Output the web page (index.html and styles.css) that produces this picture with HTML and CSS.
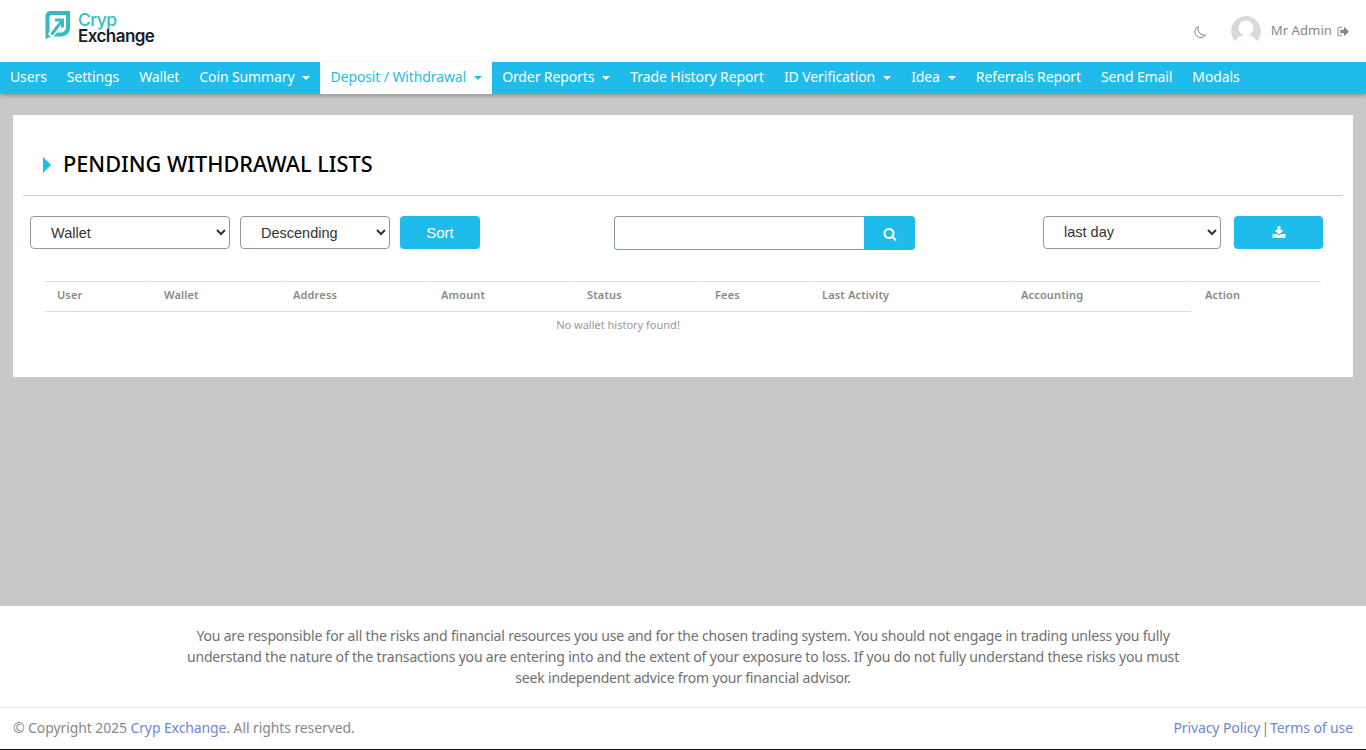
FILE: index.html
```html
<!DOCTYPE html>
<html>
<head>
    <title>Pending Withdrawal Lists</title>
    <link rel="stylesheet" href="styles.css">
</head>
<body>
    <header class="topbar">
        <a class="logo" href="#">
            <svg class="logo-mark" viewBox="0 0 25 28">
                <path d="M5 0H25V16C25 22 21 25.500 16 25.500H6L.5 28V5C.5 2 2.500 0 5 0Z" fill="#35bcc0"/>
                <path d="M6.500 4H21V15.500C21 19.500 18.500 21.500 15.500 21.500H4.500V6C4.500 5 5.500 4 6.500 4Z" fill="#fff"/>
                <path d="M5 25L17 11" fill="none" stroke="#fff" stroke-width="6"/>
                <path d="M6.500 23.500L16.500 10.500M10 9H17.500V16.500" fill="none" stroke="#35bcc0" stroke-width="3"/>
            </svg>
            <span class="logo-text"><span class="logo-top">Cryp</span><span class="logo-bottom">Exchange</span></span>
        </a>
        <div class="user-area">
            <svg class="moon" viewBox="0 0 16 16"><path d="M6 1.500A6.800 6.800 0 1 0 14.500 11.500 7.500 7.500 0 0 1 6 1.500Z" fill="none" stroke="#777" stroke-width="1"/></svg>
            <svg class="avatar" viewBox="0 0 30 30">
                <circle cx="15" cy="15" r="15" fill="#d9d9d9"/>
                <circle cx="15" cy="12" r="7.500" fill="#fff"/>
                <path d="M4 26C6 21 10 19 15 19S24 21 26 26C23 29 19 30 15 30S7 29 4 26Z" fill="#fff"/>
            </svg>
            <span class="user-name">Mr Admin</span>
            <svg class="signout" viewBox="0 0 1792 1792"><path d="M704 1440q0 4 1 20t.5 26.5-3 23.5-10 19.5-20.5 6.5h-320q-119 0-203.5-84.5t-84.5-203.5v-704q0-119 84.5-203.5t203.5-84.5h320q13 0 22.500 9.500t9.500 22.500q0 4 1 20t.5 26.500-3 23.500-10 19.500-20.500 6.500h-320q-66 0-113 47t-47 113v704q0 66 47 113t113 47h312l11.500 1 11.500 3 8 5.500 7 9 2 13.500zm928-544q0 26-19 45l-544 544q-19 19-45 19t-45-19-19-45v-288h-448q-26 0-45-19t-19-45v-384q0-26 19-45t45-19h448v-288q0-26 19-45t45-19 45 19l544 544q19 19 19 45z"/></svg>
        </div>
    </header>

    <nav class="navbar">
        <a href="#">Users</a>
        <a href="#">Settings</a>
        <a href="#">Wallet</a>
        <a href="#" class="has-caret">Coin Summary</a>
        <a href="#" class="has-caret active">Deposit / Withdrawal</a>
        <a href="#" class="has-caret">Order Reports</a>
        <a href="#">Trade History Report</a>
        <a href="#" class="has-caret">ID Verification</a>
        <a href="#" class="has-caret">Idea</a>
        <a href="#">Referrals Report</a>
        <a href="#">Send Email</a>
        <a href="#">Modals</a>
    </nav>

    <main class="content">
        <section class="card">
            <h1 class="page-title">PENDING WITHDRAWAL LISTS</h1>

            <div class="filters">
                <div class="filter-group">
                    <select class="field field-wallet"><option>Wallet</option></select>
                    <select class="field field-order"><option>Descending</option></select>
                    <button class="btn btn-sort">Sort</button>
                </div>
                <div class="search">
                    <input type="text" class="search-input">
                    <button class="btn btn-search">
                        <svg class="icon" viewBox="0 0 1792 1792"><path d="M1216 832q0-185-131.500-316.500t-316.500-131.500-316.500 131.500-131.500 316.500 131.500 316.500 316.500 131.500 316.500-131.500 131.500-316.500zm512 832q0 52-38 90t-90 38q-54 0-90-38l-343-342q-179 124-399 124-143 0-273.500-55.500t-225-150-150-225-55.500-273.500 55.500-273.500 150-225 225-150 273.500-55.500 273.500 55.500 225 150 150 225 55.500 273.500q0 220-124 399l343 343q37 37 37 90z"/></svg>
                    </button>
                </div>
                <div class="filter-group filter-right">
                    <select class="field field-range"><option>last day</option></select>
                    <button class="btn btn-download">
                        <svg class="icon" viewBox="0 0 1792 1792"><path d="M1344 1344q0-26-19-45t-45-19-45 19-19 45 19 45 45 19 45-19 19-45zm256 0q0-26-19-45t-45-19-45 19-19 45 19 45 45 19 45-19 19-45zm128-224v320q0 40-28 68t-68 28h-1472q-40 0-68-28t-28-68v-320q0-40 28-68t68-28h465l135 136q58 56 136 56t136-56l136-136h464q40 0 68 28t28 68zm-325-569q17 41-14 70l-448 448q-18 19-45 19t-45-19l-448-448q-31-29-14-70 17-39 59-39h256v-448q0-26 19-45t45-19h256q26 0 45 19t19 45v448h256q42 0 59 39z"/></svg>
                    </button>
                </div>
            </div>

            <table class="history">
                <colgroup>
                    <col class="c-user"><col class="c-wallet"><col class="c-address"><col class="c-amount"><col class="c-status">
                    <col class="c-fees"><col class="c-activity"><col class="c-accounting"><col class="c-action">
                </colgroup>
                <thead>
                    <tr>
                        <th>User</th><th>Wallet</th><th>Address</th><th>Amount</th><th>Status</th>
                        <th>Fees</th><th>Last Activity</th><th>Accounting</th><th class="th-action">Action</th>
                    </tr>
                </thead>
                <tbody>
                    <tr><td colspan="8" class="empty">No wallet history found!</td><td></td></tr>
                </tbody>
            </table>
        </section>
    </main>

    <footer class="footer">
        <p class="disclaimer">You are responsible for all the risks and financial resources you use and for the chosen trading system. You should not engage in trading unless you fully understand the nature of the transactions you are entering into and the extent of your exposure to loss. If you do not fully understand these risks you must seek independent advice from your financial advisor.</p>
        <div class="copyright">
            <span>© Copyright 2025 <a href="#">Cryp Exchange</a>. All rights reserved.</span>
            <span><a href="#">Privacy Policy</a> <span class="sep">|</span> <a href="#">Terms of use</a></span>
        </div>
    </footer>
</body>
</html>
```

FILE: styles.css
```css
* {
    box-sizing: border-box;
}
html, body {
    height: 100%;
}
body {
    margin: 0;
    font-family: "Noto Sans", sans-serif;
    background-color: #c8c8c8;
    display: flex;
    flex-direction: column;
    overflow: hidden;
}
a {
    text-decoration: none;
}

/* top bar */
.topbar {
    height: 62px;
    background: #fff;
    display: flex;
    align-items: center;
    justify-content: space-between;
    padding: 0 16px 0 45px;
}
.logo {
    display: flex;
    align-items: flex-start;
    gap: 8px;
    margin-top: -7px;
}
.logo-mark {
    width: 25px;
    height: 28px;
    margin-top: -1px;
}
.logo-text {
    display: flex;
    flex-direction: column;
    font-family: Inter, sans-serif;
    font-size: 17px;
    line-height: 16px;
    letter-spacing: -0.55px;
    font-weight: 500;
}
.logo-top {
    color: #35bcc0;
    font-size: 17.500px;
}
.logo-bottom {
    color: #14202b;
    font-weight: 600;
}
.user-area {
    display: flex;
    align-items: center;
    color: #888;
    font-size: 13.200px;
}
.moon {
    width: 14px;
    height: 14px;
    margin-right: 24px;
    margin-top: 2px;
}
.avatar {
    width: 30px;
    height: 30px;
    border-radius: 50%;
    margin-right: 10px;
}
.user-name {
    padding-bottom: 2px;
}
.signout {
    width: 13px;
    height: 13px;
    fill: #888;
    margin-left: 5px;
}

/* nav */
.navbar {
    height: 32px;
    background: #1fbbea;
    display: flex;
    box-shadow: 0 2px 4px rgba(0,0,0,0.25);
    position: relative;
}
.navbar a {
    color: #fff;
    font-size: 14px;
    letter-spacing: -0.11px;
    line-height: 30px;
    padding: 0 10px;
}
.navbar a.active {
    background: #fff;
    color: #25bde2;
}
.has-caret::after {
    content: "";
    display: inline-block;
    border-top: 4px solid currentColor;
    border-left: 4px solid transparent;
    border-right: 4px solid transparent;
    margin-left: 8px;
    vertical-align: 2px;
}

/* card */
.content {
    flex: 1;
    padding: 21px 13px 0;
}
.card {
    background: #fff;
    height: 262px;
    padding-top: 33px;
}
.page-title {
    margin: 0 10px;
    height: 48px;
    border-bottom: 1px solid #ccc;
    padding-left: 40px;
    font-size: 21.7px;
    line-height: 32px;
    font-weight: 500;
    color: #000;
    position: relative;
}
.page-title::before {
    content: "";
    position: absolute;
    left: 20px;
    top: 9px;
    border-left: 8px solid #1fbbea;
    border-top: 8px solid transparent;
    border-bottom: 8px solid transparent;
}

/* filter row */
.filters {
    display: flex;
    align-items: flex-start;
    margin: 20px 30px 0 17px;
}
.filter-group {
    display: flex;
    gap: 10px;
}
.filter-right {
    margin-left: auto;
    gap: 13px;
}
.field {
    height: 33px;
    border: 1px solid #8a9a9f;
    border-radius: 4px;
    background: #fff;
    color: #333;
    font-family: "Liberation Sans", sans-serif;
    font-size: 14.500px;
    padding-left: 16px;
}
.field-wallet { width: 200px; }
.field-order { width: 150px; }
.field-range {
    width: 178px;
    padding-bottom: 2px;
}
.btn {
    height: 33px;
    border: 0;
    border-radius: 4px;
    background: #1fbbea;
    color: #fff;
    font-family: "Liberation Sans", sans-serif;
    font-size: 15px;
    display: flex;
    align-items: center;
    justify-content: center;
}
.btn-sort { width: 80px; }
.btn-download { width: 89px; }
.icon {
    width: 14px;
    height: 14px;
    fill: #fff;
}
.search {
    display: flex;
    margin-left: 134px;
}
.search-input {
    width: 250px;
    height: 34px;
    border: 1px solid #8a9a9f;
    border-right: 0;
    border-radius: 4px 0 0 4px;
}
.btn-search {
    width: 51px;
    height: 34px;
    border-radius: 0 4px 4px 0;
}
.btn-search .icon {
    margin-top: 2px;
}

/* table */
.history {
    margin: 31px 0 0 31px;
    border-collapse: separate;
    border-spacing: 1px 0;
    table-layout: fixed;
    width: 1278px;
    font-size: 11px;
}
.c-user { width: 106px; }
.c-wallet { width: 128px; }
.c-address { width: 147px; }
.c-amount { width: 145px; }
.c-status { width: 127px; }
.c-fees { width: 106px; }
.c-activity { width: 198px; }
.c-accounting { width: 182px; }
.c-action { width: 129px; }
.history th {
    height: 30px;
    padding: 0 12px 4px;
    text-align: left;
    color: #888;
    font-weight: 600;
    letter-spacing: 0.15px;
    border-top: 1px solid #ddd;
}
.history th.th-action {
    padding-left: 13px;
}
.empty {
    text-align: center;
    color: #999;
    padding: 5px 0 6px;
    line-height: 15px;
    border-top: 1px solid #ddd;
}

/* footer */
.footer {
    background: #fff;
    height: 144px;
    border-bottom: 1px solid #111;
}
.disclaimer {
    margin: 0 auto;
    width: 1000px;
    height: 101px;
    padding-top: 19px;
    text-align: center;
    color: #707070;
    font-size: 14px;
    letter-spacing: -0.18px;
    line-height: 21px;
}
.copyright {
    display: flex;
    justify-content: space-between;
    align-items: center;
    height: 42px;
    padding: 0 13px 2px;
    border-top: 1px solid #e4e4e4;
    color: #888;
    font-size: 14px;
    letter-spacing: -0.1px;
}
.copyright a {
    color: #6f86d6;
}
.sep {
    margin: 0 -2.500px;
}
```
